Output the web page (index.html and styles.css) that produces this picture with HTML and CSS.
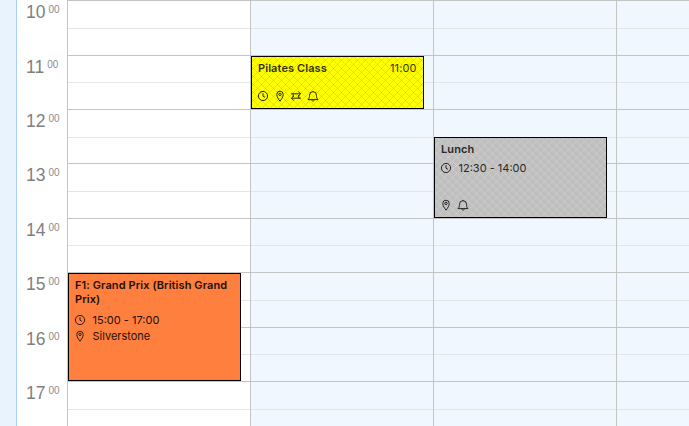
FILE: index.html
```html
<!DOCTYPE html>
<html lang="en">
<head>
    <meta charset="UTF-8">
    <meta name="viewport" content="width=device-width, initial-scale=1.0">
    <title>Calendar Week</title>
    <link rel="stylesheet" href="styles.css">
</head>
<body>
    <svg class="icon-defs" width="0" height="0">
        <symbol id="i-clock" viewBox="0 0 12 12">
            <circle cx="6" cy="6" r="4.6"/>
            <path d="M6 3.2V6.2L7.9 7.3"/>
        </symbol>
        <symbol id="i-pin" viewBox="0 0 12 12">
            <path d="M6 11.2C4.4 9 2.8 7 2.8 4.4a3.2 3.2 0 0 1 6.4 0C9.2 7 7.6 9 6 11.2Z"/>
            <circle cx="6" cy="4.4" r="1.2"/>
        </symbol>
        <symbol id="i-repeat" viewBox="0 0 12 12">
            <path d="M1 3.8H10.4M8.2 1.4 10.6 3.8 8.2 6.2M11 8.2H1.6M3.8 5.8 1.4 8.2 3.8 10.6M3.2 3.8V7M8.8 8.2V5"/>
        </symbol>
        <symbol id="i-bell" viewBox="0 0 12 12">
            <path d="M1 9.6H11C9.8 8.6 9.5 7.2 9.5 5.2A3.5 3.5 0 0 0 2.5 5.2C2.5 7.2 2.2 8.6 1 9.6Z"/>
            <path d="M6 1.7V0.9M4.8 10.4a1.3 1.3 0 0 0 2.4 0"/>
        </symbol>
    </svg>

    <div class="calendar">
        <div class="sidebar"></div>

        <div class="times">
            <div class="time">10 <sup>00</sup></div>
            <div class="time">11 <sup>00</sup></div>
            <div class="time">12 <sup>00</sup></div>
            <div class="time">13 <sup>00</sup></div>
            <div class="time">14 <sup>00</sup></div>
            <div class="time">15 <sup>00</sup></div>
            <div class="time">16 <sup>00</sup></div>
            <div class="time">17 <sup>00</sup></div>
        </div>

        <div class="day day-today">
            <div class="hour"></div><div class="hour"></div><div class="hour"></div><div class="hour"></div>
            <div class="hour"></div><div class="hour"></div><div class="hour"></div><div class="hour"></div>
            <div class="event event-orange">
                <div class="event-title">F1: Grand Prix (British Grand Prix)</div>
                <div class="event-row"><svg class="icon"><use href="#i-clock"/></svg>15:00 - 17:00</div>
                <div class="event-row"><svg class="icon"><use href="#i-pin"/></svg>Silverstone</div>
            </div>
        </div>

        <div class="day">
            <div class="hour"></div><div class="hour"></div><div class="hour"></div><div class="hour"></div>
            <div class="hour"></div><div class="hour"></div><div class="hour"></div><div class="hour"></div>
            <div class="event event-yellow">
                <div class="event-head">
                    <div class="event-title">Pilates Class</div>
                    <div class="event-start">11:00</div>
                </div>
                <div class="event-icons">
                    <svg class="icon"><use href="#i-clock"/></svg>
                    <svg class="icon"><use href="#i-pin"/></svg>
                    <svg class="icon"><use href="#i-repeat"/></svg>
                    <svg class="icon"><use href="#i-bell"/></svg>
                </div>
            </div>
        </div>

        <div class="day">
            <div class="hour"></div><div class="hour"></div><div class="hour"></div><div class="hour"></div>
            <div class="hour"></div><div class="hour"></div><div class="hour"></div><div class="hour"></div>
            <div class="event event-grey">
                <div class="event-title">Lunch</div>
                <div class="event-row"><svg class="icon"><use href="#i-clock"/></svg>12:30 - 14:00</div>
                <div class="event-icons">
                    <svg class="icon"><use href="#i-pin"/></svg>
                    <svg class="icon"><use href="#i-bell"/></svg>
                </div>
            </div>
        </div>

        <div class="day day-last">
            <div class="hour"></div><div class="hour"></div><div class="hour"></div><div class="hour"></div>
            <div class="hour"></div><div class="hour"></div><div class="hour"></div><div class="hour"></div>
        </div>
    </div>
</body>
</html>
```

FILE: styles.css
```css
* {
    box-sizing: border-box;
}

html,
body {
    margin: 0;
    height: 100%;
    overflow: hidden;
}

body {
    background-color: #ffffff;
    font-family: 'Inter', sans-serif;
    color: #1a1a1a;
}

.icon-defs {
    display: block;
    height: 0;
}

.calendar {
    display: flex;
    height: 426px;
    overflow: hidden;
}

.sidebar {
    width: 17px;
    flex: none;
    background-color: #e9f3fe;
    border-right: 1px solid #a6cffb;
}

.times {
    width: 50px;
    flex: none;
    padding-top: 0.2px;
}

.time {
    display: flex;
    gap: 3px;
    height: 54.4px;
    padding: 1px 0 0 9px;
    font-family: 'Liberation Sans', sans-serif;
    font-size: 17.5px;
    line-height: 22px;
    color: #7f7f7f;
    white-space: nowrap;
}

.time sup {
    margin-top: 4px;
    font-size: 10px;
    line-height: 10px;
    vertical-align: baseline;
    color: #8c8c8c;
}

.day {
    position: relative;
    width: 183px;
    flex: none;
    padding-top: 0.2px;
    border-left: 1px solid #c4c4c4;
    background-color: #f0f7ff;
}

.day-today {
    background-color: #ffffff;
}

.day-last {
    width: 73px;
}

.hour {
    height: 54.4px;
    border-top: 1px solid #c4c4c4;
}

.hour::before {
    content: "";
    display: block;
    height: 26.6px;
    border-bottom: 1px solid #e2e6ea;
}

.event {
    position: absolute;
    left: 0;
    width: 173px;
    padding: 4px 6px;
    border: 1px solid #000000;
    font-size: 11px;
    line-height: 14px;
    letter-spacing: 0.09px;
    color: #2a2a2a;
}

.event-title {
    font-weight: 600;
}

.event-row {
    display: flex;
    align-items: center;
    gap: 6.5px;
    height: 16px;
    line-height: 16px;
    letter-spacing: 0;
}

.event-title + .event-row {
    margin-top: 4px;
}

.event-head {
    display: flex;
    justify-content: space-between;
    padding-right: 0.5px;
}

.event-start {
    color: #3a3a00;
}

.event-icons {
    position: absolute;
    left: 5px;
    bottom: 6px;
    display: flex;
    gap: 4.5px;
}

.event-row .icon {
    margin-left: -1px;
}

.icon {
    width: 12px;
    height: 12px;
    flex: none;
    fill: none;
    stroke: #141414;
    stroke-width: 0.9;
}

.event-orange {
    top: 273px;
    height: 108px;
    background-color: #ff7f3f;
    color: #1e0f08;
}

.event-orange .event-title + .event-row {
    margin-top: 6px;
}

.event-yellow {
    top: 56px;
    height: 53px;
    color: #333300;
    background-color: #ffff00;
    background-image:
        repeating-linear-gradient(45deg, rgba(0, 0, 0, 0.1) 0, rgba(0, 0, 0, 0.1) 1.4px, transparent 1.4px, transparent 5.657px),
        repeating-linear-gradient(-45deg, rgba(0, 0, 0, 0.1) 0, rgba(0, 0, 0, 0.1) 1.4px, transparent 1.4px, transparent 5.657px);
}

.event-grey {
    top: 137px;
    height: 81px;
    background-color: #bfbfbf;
    background-image:
        repeating-linear-gradient(45deg, rgba(255, 255, 255, 0.18) 0, rgba(255, 255, 255, 0.18) 1.4px, transparent 1.4px, transparent 5.657px),
        repeating-linear-gradient(-45deg, rgba(255, 255, 255, 0.18) 0, rgba(255, 255, 255, 0.18) 1.4px, transparent 1.4px, transparent 5.657px);
}
```
